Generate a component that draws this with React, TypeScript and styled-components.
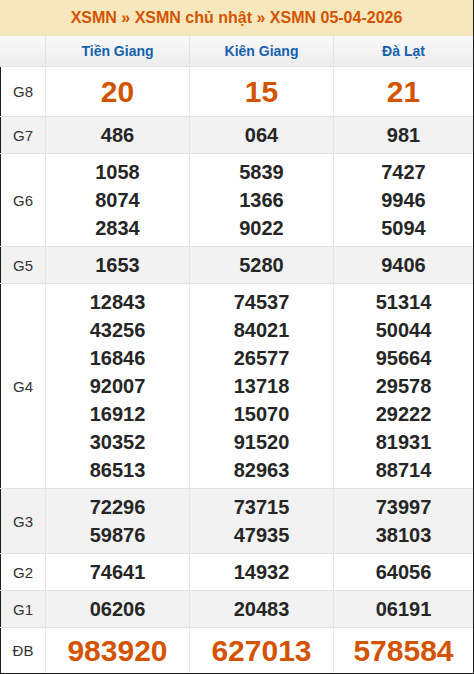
import styled, { createGlobalStyle } from "styled-components";

const GlobalStyle = createGlobalStyle`
  body {
    margin: 0;
    background: #fff;
    font-family: "Liberation Sans", Arial, sans-serif;
  }
`;

type Prize = {
  label: string;
  values: string[][];
  shade?: boolean;
  big?: "g8" | "db";
};

const provinces = ["Tiền Giang", "Kiên Giang", "Đà Lạt"];

const prizes: Prize[] = [
  { label: "G8", values: [["20"], ["15"], ["21"]], big: "g8" },
  { label: "G7", values: [["486"], ["064"], ["981"]], shade: true },
  {
    label: "G6",
    values: [
      ["1058", "8074", "2834"],
      ["5839", "1366", "9022"],
      ["7427", "9946", "5094"],
    ],
  },
  { label: "G5", values: [["1653"], ["5280"], ["9406"]], shade: true },
  {
    label: "G4",
    values: [
      ["12843", "43256", "16846", "92007", "16912", "30352", "86513"],
      ["74537", "84021", "26577", "13718", "15070", "91520", "82963"],
      ["51314", "50044", "95664", "29578", "29222", "81931", "88714"],
    ],
  },
  {
    label: "G3",
    values: [
      ["72296", "59876"],
      ["73715", "47935"],
      ["73997", "38103"],
    ],
    shade: true,
  },
  { label: "G2", values: [["74641"], ["14932"], ["64056"]] },
  { label: "G1", values: [["06206"], ["20483"], ["06191"]], shade: true },
  { label: "ĐB", values: [["983920"], ["627013"], ["578584"]], big: "db" },
];

const Frame = styled.div`
  width: 474px;
  height: 674px;
  box-sizing: border-box;
  border-right: 1px solid #1c1c1c;
  border-bottom: 1px solid #1c1c1c;
  overflow: hidden;
`;

const Title = styled.div`
  height: 36px;
  line-height: 36px;
  background: #f6e7bd;
  color: #d35400;
  font-size: 16px;
  font-weight: bold;
  text-align: center;
`;

const Row = styled.div<{ $shade?: boolean; $head?: boolean }>`
  display: grid;
  grid-template-columns: 46px 144px 144px 1fr;
  border-bottom: 1px solid #e3e3e3;
  background: ${(p) =>
    p.$head
      ? "linear-gradient(#f9f9f9, #ededed)"
      : p.$shade
      ? "#f2f2f2"
      : "#fff"};
  &:last-child {
    border-bottom: none;
  }
`;

const Cell = styled.div<{ $last?: boolean }>`
  box-sizing: border-box;
  border-right: ${(p) => (p.$last ? "none" : "1px solid #e3e3e3")};
  display: flex;
  flex-direction: column;
  align-items: center;
  justify-content: center;
  padding: 4px 0;
`;

const Label = styled(Cell)<{ $head?: boolean }>`
  border-left: 1px solid ${(p) => (p.$head ? "transparent" : "#1c1c1c")};
  color: #333;
  font-size: 15px;
`;

const Province = styled.div`
  color: #1561ad;
  font-size: 14px;
  font-weight: bold;
  line-height: 22px;
`;

const Num = styled.div<{ $big?: "g8" | "db" }>`
  font-weight: bold;
  color: ${(p) => (p.$big ? "#d35400" : "#262626")};
  font-size: ${(p) => (p.$big ? "30px" : "20px")};
  line-height: ${(p) =>
    p.$big === "g8" ? "41px" : p.$big === "db" ? "37px" : "28px"};
`;

export default function App() {
  return (
    <>
      <GlobalStyle />
      <Frame>
        <Title>XSMN » XSMN chủ nhật » XSMN 05-04-2026</Title>
        <Row $head>
          <Label $head />
          {provinces.map((name, i) => (
            <Cell key={name} $last={i === 2}>
              <Province>{name}</Province>
            </Cell>
          ))}
        </Row>
        {prizes.map((prize) => (
          <Row key={prize.label} $shade={prize.shade}>
            <Label>{prize.label}</Label>
            {prize.values.map((col, i) => (
              <Cell key={i} $last={i === 2}>
                {col.map((v) => (
                  <Num key={v} $big={prize.big}>
                    {v}
                  </Num>
                ))}
              </Cell>
            ))}
          </Row>
        ))}
      </Frame>
    </>
  );
}
